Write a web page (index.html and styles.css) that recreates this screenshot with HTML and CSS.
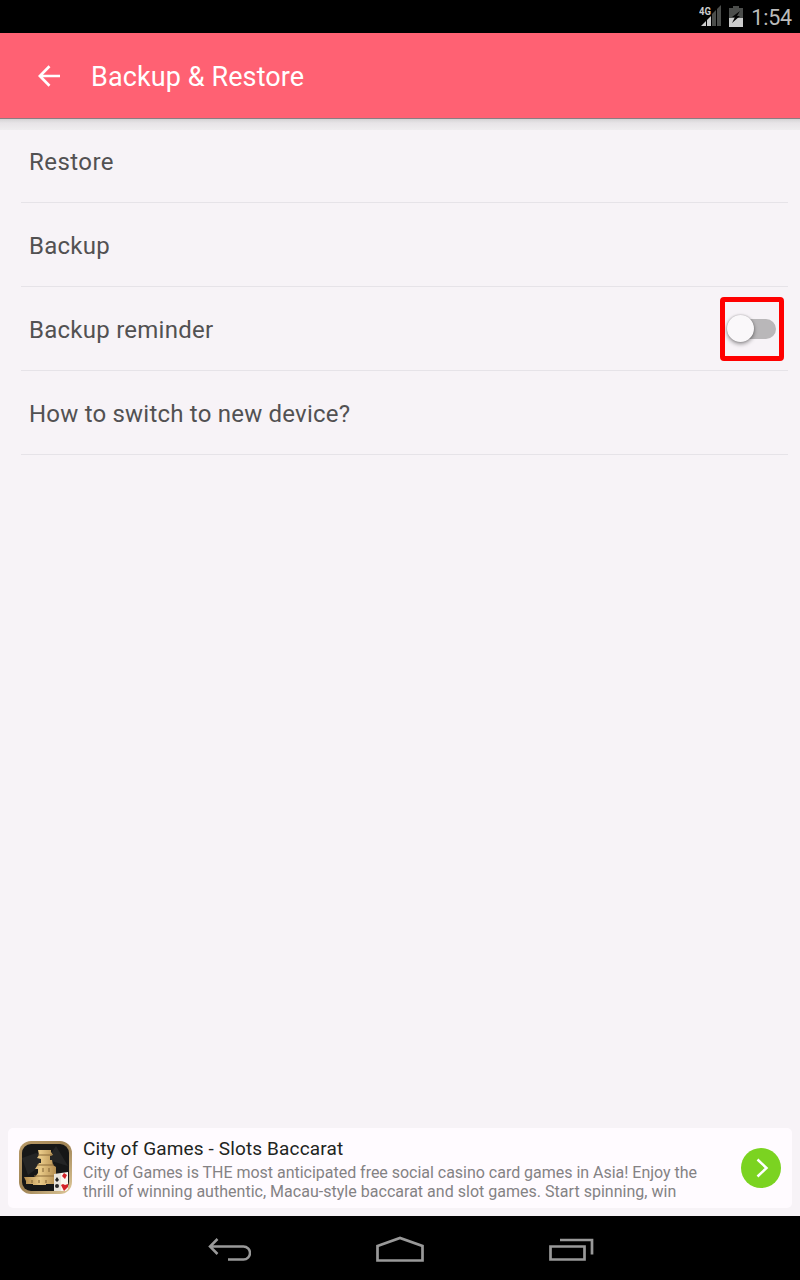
FILE: index.html
```html
<!DOCTYPE html>
<html lang="en">
<head>
<meta charset="utf-8">
<title>Backup &amp; Restore</title>
<link rel="stylesheet" href="styles.css">
</head>
<body>
<div class="status">
  <svg class="signal" width="24" height="24" viewBox="0 0 24 24">
    <path d="M2 22 7 17V22Z" fill="#ccc"/><path d="M8 22V16l4-4V22Z" fill="#ccc"/>
    <path d="M13 22V10l4-4V22ZM18 22V5l4-4V22Z" fill="#4b4d4b"/>
    <text class="network" x="0" y="11" textLength="12" lengthAdjust="spacingAndGlyphs">4G</text>
  </svg>
  <svg class="battery" width="14" height="21" viewBox="0 0 14 21">
    <path d="M4 0h6v2h4v19H0V2h4z" fill="#4b4d4b"/><path d="M0 12h14v9H0z" fill="#ccc"/>
    <path d="M11 5 3 11h3l-3 6 8-7H8z" fill="#050505"/>
  </svg>
  <span class="clock">1:54</span>
</div>
<header class="appbar">
  <svg class="back" width="22" height="22" viewBox="0 0 22 22"><path d="M22 11H2M11.500 1.200 1.800 11l9.700 9.800" fill="none" stroke="#fff" stroke-width="2.700"/></svg>
  <h1 class="title">Backup &amp; Restore</h1>
</header>
<main class="list">
  <div class="row restore"><span>Restore</span></div>
  <div class="row"><span>Backup</span></div>
  <div class="row"><span>Backup reminder</span><span class="highlight"><span class="track"><span class="thumb"></span></span></span></div>
  <div class="row how"><span>How to switch to new device?</span></div>
</main>
<aside class="ad">
  <svg class="ad-icon" width="54" height="54" viewBox="0 0 54 54">
    <defs><linearGradient id="gold" x1="0" y1="0" x2="1" y2="1"><stop offset="0" stop-color="#b99b68"/><stop offset=".5" stop-color="#a08455"/><stop offset="1" stop-color="#e2cb9d"/></linearGradient>
    <linearGradient id="stone" x1="0" x2="1"><stop offset="0" stop-color="#b18a4c"/><stop offset=".5" stop-color="#e8c987"/><stop offset="1" stop-color="#b18a4c"/></linearGradient></defs>
    <rect x="1" y="0" width="53" height="53" rx="12" fill="url(#gold)"/>
    <rect x="4" y="3" width="47" height="47" rx="9" fill="#161717"/>
    <path d="m4 17 14-5 12 5 8-12 12 20-20-6-20 15z" fill="#242525"/>
    <path d="M20 9h13v2l2 3-3 1v4h2l1 5 3 2v7h1v10H28v1H15v-1H8v-3l-2-4h11l3-4v-4h-3l4-6h2v-4l-4-1 2-3z" fill="url(#stone)"/>
    <path d="M20 14h14M19 24h17M16 35h21" stroke="#8a6a3a"/>
    <path d="M25 27v4M31 27v4M14 39v3M21 39v3M28 39v3" stroke="#806235"/>
    <path d="m36 33 7-1v18h-7z" fill="#e9e5dd"/><path d="m43 32 7-1v17l-2 2h-5z" fill="#faf7ef"/>
    <path d="m39 36 2 3-2 2-2-2z" fill="#222"/><path d="m46 32 3 2-2 4-3-3zM43 44l2-1 2 1 3-1v3l-4 4z" fill="#d32127"/>
    <circle cx="39" cy="45" r="2" fill="#292929"/>
  </svg>
  <div class="ad-copy"><div class="ad-title">City of Games - Slots Baccarat</div>
    <div class="ad-text l1">City of Games is THE most anticipated free social casino card games in Asia! Enjoy the</div>
    <div class="ad-text l2">thrill of winning authentic, Macau-style baccarat and slot games. Start spinning, win</div></div>
  <svg class="go" width="40" height="40" viewBox="0 0 40 40"><circle cx="20" cy="20" r="20" fill="#7bd321"/><path d="m16.500 11.500 9 8.500-9 8.500" fill="none" stroke="#fff" stroke-width="2.500"/></svg>
</aside>
<nav class="nav">
  <svg width="44" height="24" viewBox="0 0 44 24"><path d="M3 9.500h33.500a6 6 0 0 1 0 13H21M10.500 2 3 9.500l7.500 7.500" fill="none" stroke="#999" stroke-width="2.500"/></svg>
  <svg width="48" height="26" viewBox="0 0 48 26"><path d="M1.500 10 24 2l22.500 8v14.500h-45z" fill="none" stroke="#999" stroke-width="2.700"/></svg>
  <svg width="46" height="24" viewBox="0 0 46 24"><path d="M1.500 9.500h34v13h-34zM11 3h32v14.500" fill="none" stroke="#999" stroke-width="2.700"/></svg>
</nav>
</body>
</html>
```
FILE: styles.css
```css
* { box-sizing: border-box; }
body { margin: 0; width: 800px; height: 1280px; display: flex; flex-direction: column; background: #f7f3f7; font-family: Roboto, sans-serif; }
svg { display: block; flex: none; }
.status { height: 33px; background: #000; display: flex; justify-content: flex-end; align-items: flex-start; padding: 4px 8px 0 0; }
.network { font: bold 11px Roboto, sans-serif; fill: #ccc; }
.battery { margin: 2px 8px 0 6px; }
.clock { font-size: 21.500px; line-height: 28px; letter-spacing: -.2px; color: #bbb; }
.appbar { height: 86px; flex: none; background: #ff6173; border-bottom: 1px solid #8c7c80; display: flex; align-items: center; padding-left: 38px; }
.title { margin: 2px 0 0 31px; font-size: 27px; line-height: 34px; font-weight: 400; letter-spacing: .1px; color: #fff; white-space: nowrap; }
.list { flex: 1; padding: 0 12px 0 21px; background: linear-gradient(#d5d3d5, #e7e4e7 4px, #efedef 11px, #f7f3f7 11px); }
.row { height: 84px; display: flex; align-items: center; justify-content: space-between; padding: 2px 4px 0 8px; border-bottom: 1px solid #e6e3e8; font-size: 24px; color: #525152; letter-spacing: .25px; }
.restore { letter-spacing: .45px; }
.how { letter-spacing: .21px; }
.highlight { width: 64px; height: 64px; margin-top: -2px; border: 5px solid #f00; border-radius: 4px; display: flex; align-items: center; padding-left: 5px; }
.track { width: 46px; height: 20px; border-radius: 10px; background: #b9b7b9; display: flex; align-items: center; }
.thumb { width: 27px; height: 27px; margin-left: -3px; border-radius: 50%; background: #faf8fa; box-shadow: 0 2px 4px #0006, 0 0 2px #0004; flex: none; }
.ad { height: 80px; flex: none; margin: 0 8px 8px; padding: 0 11px 0 10px; display: flex; align-items: center; background: #fffbff; border-radius: 5px; }
.ad-copy { flex: 1; margin-left: 11px; white-space: nowrap; }
.ad-title { padding-top: 1px; font-size: 19px; line-height: 24px; letter-spacing: .14px; color: #212421; margin-bottom: 2px; }
.ad-text { font-size: 16px; line-height: 19px; color: #848284; }
.l1 { letter-spacing: -.02px; }
.l2 { letter-spacing: .02px; }
.nav { height: 64px; flex: none; background: #000; display: flex; align-items: center; justify-content: center; gap: 125px; padding: 2px 0 0 2px; }
```
